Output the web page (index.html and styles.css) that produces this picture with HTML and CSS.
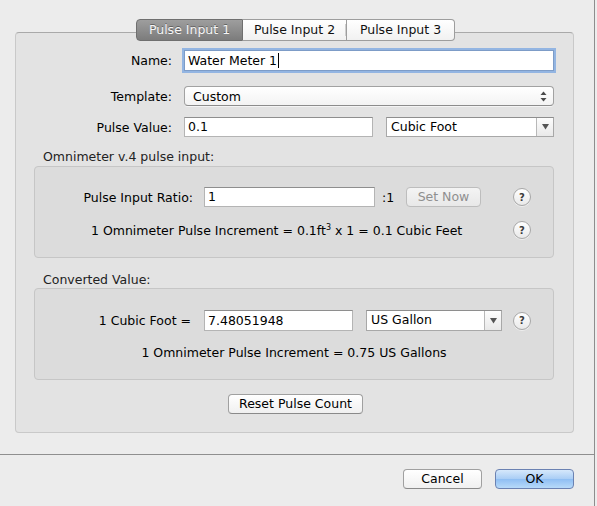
FILE: index.html
```html
<!DOCTYPE html>
<html>
<head>
<meta charset="utf-8">
<link rel="stylesheet" href="styles.css">
</head>
<body>
<div class="window">
  <div class="main">
    <div class="tabview">
      <div class="tabs">
        <div class="tab tab-sel">Pulse Input 1</div>
        <div class="tab tab-2">Pulse Input 2</div>
        <div class="tab tab-3">Pulse Input 3</div>
      </div>
      <div class="tabbox">
        <div class="frow row-name">
          <span class="flabel">Name:</span>
          <div class="field field-name field-focus">Water Meter 1<span class="caret"></span></div>
        </div>
        <div class="frow row-template">
          <span class="flabel">Template:</span>
          <div class="popup">
            <span>Custom</span>
            <svg class="updown" width="7" height="11" viewBox="0 0 7 11"><path d="M3.5 0.5 L6.5 4 L0.5 4 Z" fill="#4a4a4a"/><path d="M3.5 10.5 L6.5 7 L0.5 7 Z" fill="#4a4a4a"/></svg>
          </div>
        </div>
        <div class="frow row-pulse">
          <span class="flabel">Pulse Value:</span>
          <div class="field field-pulse">0.1</div>
          <div class="combo combo-unit">
            <span class="combo-text">Cubic Foot</span>
            <span class="combo-btn"><svg width="7" height="6" viewBox="0 0 7 6"><path d="M0 0 L7 0 L3.5 5.5 Z" fill="#555"/></svg></span>
          </div>
        </div>

        <div class="gtitle gtitle-1">Omnimeter v.4 pulse input:</div>
        <div class="group">
          <div class="grow grow-ratio">
            <span class="glabel glabel-ratio">Pulse Input Ratio:</span>
            <div class="field field-ratio">1</div>
            <span class="ratio-suffix">:1</span>
            <button class="btn btn-disabled btn-setnow">Set Now</button>
            <span class="help help-1">?</span>
          </div>
          <div class="grow grow-inc">
            <span class="inc-text">1 Omnimeter Pulse Increment = 0.1ft<sup class="sup">3</sup> x 1 = 0.1 Cubic Feet</span>
            <span class="help help-2">?</span>
          </div>
        </div>

        <div class="gtitle gtitle-2">Converted Value:</div>
        <div class="group">
          <div class="grow grow-conv">
            <span class="glabel glabel-conv">1 Cubic Foot =</span>
            <div class="field field-conv">7.48051948</div>
            <div class="combo combo-gal">
              <span class="combo-text">US Gallon</span>
              <span class="combo-btn"><svg width="7" height="6" viewBox="0 0 7 6"><path d="M0 0 L7 0 L3.5 5.5 Z" fill="#555"/></svg></span>
            </div>
            <span class="help help-3">?</span>
          </div>
          <div class="grow grow-gal">
            <span>1 Omnimeter Pulse Increment = 0.75 US Gallons</span>
          </div>
        </div>

        <div class="reset-row">
          <button class="btn btn-reset">Reset Pulse Count</button>
        </div>
      </div>
    </div>
  </div>
  <div class="footer">
    <button class="btn btn-foot">Cancel</button>
    <button class="btn btn-foot btn-ok">OK</button>
  </div>
</div>
</body>
</html>
```

FILE: styles.css
```css
* { box-sizing: border-box; }

html, body {
  margin: 0;
  padding: 0;
  background: #ededed;
}

body {
  font-family: "DejaVu Sans", "Liberation Sans", sans-serif;
  font-size: 12.5px;
  color: #000;
  width: 597px;
  height: 506px;
  overflow: hidden;
}

.window {
  width: 595px;
  height: 506px;
  border-right: 1px solid #8d8d8d;
  background: #ececec;
  display: flex;
  flex-direction: column;
}

.main {
  height: 455px;
  border-bottom: 1px solid #8f8f8f;
  padding: 19px 0 0 15px;
}

.tabview {
  width: 559px;
}

.tabs {
  position: relative;
  z-index: 1;
  display: flex;
  justify-content: center;
  padding-left: 2px;
  height: 22px;
}

.tab {
  height: 22px;
  line-height: 20px;
  text-align: center;
  border: 1px solid #9d9d9d;
  border-left: none;
  background: linear-gradient(#ffffff, #f1f1f1);
  color: #111;
  font-size: 12.5px;
}

.tab-sel {
  width: 107px;
  border-left: 1px solid #6f6f6f;
  border-color: #6f6f6f;
  border-radius: 4px 0 0 4px;
  background: linear-gradient(#9e9e9e, #7c7c7c);
  color: #f6f6f6;
  text-shadow: 0 -1px 0 rgba(0,0,0,0.35);
}

.tab-2 {
  width: 104px;
  position: relative;
}

.tab-2::after {
  content: "";
  position: absolute;
  right: 0;
  top: 4px;
  bottom: 4px;
  width: 1px;
  background: #cfcfcf;
}

.tab-3 {
  width: 108px;
  border-radius: 0 4px 4px 0;
}

.tabbox {
  margin-top: -9px;
  height: 401px;
  border: 1px solid #c9c9c9;
  border-top-color: #a9a9a9;
  border-radius: 4px;
  background: #e3e3e3;
  padding-top: 17px;
}

.frow {
  display: flex;
  align-items: center;
}

.flabel {
  width: 156px;
  text-align: right;
  margin-right: 12px;
  flex: none;
}

.row-name { height: 21px; }
.row-template { height: 20px; margin-top: 15px; }
.row-pulse { height: 20px; margin-top: 11px; }

.field {
  height: 20px;
  line-height: 18px;
  background: #fff;
  border: 1px solid #b4b4b4;
  border-top-color: #8e8e8e;
  padding-left: 3px;
  flex: none;
}

.field-name {
  width: 370px;
  height: 21px;
  line-height: 19px;
  border-color: #7d9cc7;
  box-shadow: 0 0 0 2px rgba(120,165,225,0.75);
}

.caret {
  display: inline-block;
  width: 1px;
  height: 15px;
  background: #000;
  vertical-align: -3px;
  margin-left: 1px;
}

.popup {
  width: 370px;
  height: 20px;
  border: 1px solid #a2a2a2;
  border-bottom-color: #8c8c8c;
  border-radius: 4px;
  background: linear-gradient(#ffffff, #f3f3f3);
  display: flex;
  align-items: center;
  justify-content: space-between;
  padding: 0 6px 0 8px;
  box-shadow: 0 1px 0 rgba(255,255,255,0.6);
}

.updown { display: block; }

.field-pulse { width: 189px; }

.combo {
  height: 20px;
  display: flex;
  background: #fff;
  border: 1px solid #a8a8a8;
  border-top-color: #8e8e8e;
  flex: none;
}

.combo-unit {
  width: 168px;
  margin-left: 13px;
}

.combo-text {
  flex: 1;
  line-height: 18px;
  padding-left: 4px;
}

.combo-btn {
  width: 17px;
  border-left: 1px solid #b8b8b8;
  background: linear-gradient(#fdfdfd, #e9e9e9);
  display: flex;
  align-items: center;
  justify-content: center;
}

.combo-btn svg { display: block; }

.gtitle {
  height: 14px;
  line-height: 14px;
  padding-left: 27px;
  color: #222;
}

.gtitle-1 { margin-top: 13px; }
.gtitle-2 { margin-top: 15px; }

.group {
  margin: 2px 0 0 18px;
  width: 520px;
  height: 92px;
  border: 1px solid #c6c6c6;
  border-radius: 4px;
  background: #dcdcdc;
}

.gtitle-2 + .group { margin-top: 1px; }

.grow {
  display: flex;
  align-items: center;
}

.glabel {
  text-align: right;
  flex: none;
}

.grow-ratio {
  margin-top: 20px;
  height: 20px;
}

.glabel-ratio {
  width: 158px;
  margin-right: 11px;
}

.field-ratio { width: 171px; }

.ratio-suffix {
  width: 31px;
  padding-left: 7px;
  flex: none;
}

.btn {
  font-family: "DejaVu Sans", "Liberation Sans", sans-serif;
  font-size: 12.5px;
  height: 20px;
  padding: 0;
  border: 1px solid #a0a0a0;
  border-bottom-color: #8a8a8a;
  border-radius: 4px;
  background: linear-gradient(#ffffff, #f0f0f0);
  color: #000;
  line-height: 18px;
  text-align: center;
}

.btn-setnow {
  width: 75px;
  flex: none;
}

.btn-disabled {
  color: #8f8f8f;
  border-color: #bdbdbd;
  background: linear-gradient(#f4f4f4, #e8e8e8);
}

.help {
  width: 18px;
  height: 18px;
  border-radius: 50%;
  border: 1px solid #a8a8a8;
  background: linear-gradient(#ffffff, #e9e9e9);
  font-size: 10px;
  font-weight: bold;
  color: #3a3a3a;
  display: flex;
  align-items: center;
  justify-content: center;
  flex: none;
  box-shadow: 0 1px 0 rgba(255,255,255,0.5);
}

.help-1 { margin-left: 32px; }

.grow-inc {
  margin-top: 14px;
  height: 18px;
  padding-left: 56px;
}

.inc-text {
  width: 422px;
  flex: none;
}

.sup {
  font-size: 8px;
  vertical-align: 5px;
  line-height: 0;
}

.grow-conv {
  margin-top: 21px;
  height: 21px;
}

.glabel-conv {
  width: 156px;
  margin-right: 13px;
}

.field-conv {
  width: 149px;
  height: 21px;
  line-height: 19px;
}

.combo-gal {
  width: 136px;
  height: 21px;
  margin-left: 13px;
}

.help-3 { margin-left: 11px; }

.grow-gal {
  margin-top: 14px;
  height: 14px;
  justify-content: center;
}

.reset-row {
  display: flex;
  justify-content: center;
  margin-top: 14px;
}

.btn-reset {
  width: 135px;
  margin-left: 2px;
}

.footer {
  flex: 1;
  display: flex;
  justify-content: flex-end;
  align-items: flex-start;
  padding: 14px 20px 0 0;
  gap: 13px;
}

.btn-foot {
  width: 79px;
}

.btn-ok {
  border-color: #6b82b2;
  background: linear-gradient(#d6e8fb, #a9cdf5 50%, #8fbef3 51%, #b7daf9);
}
```
